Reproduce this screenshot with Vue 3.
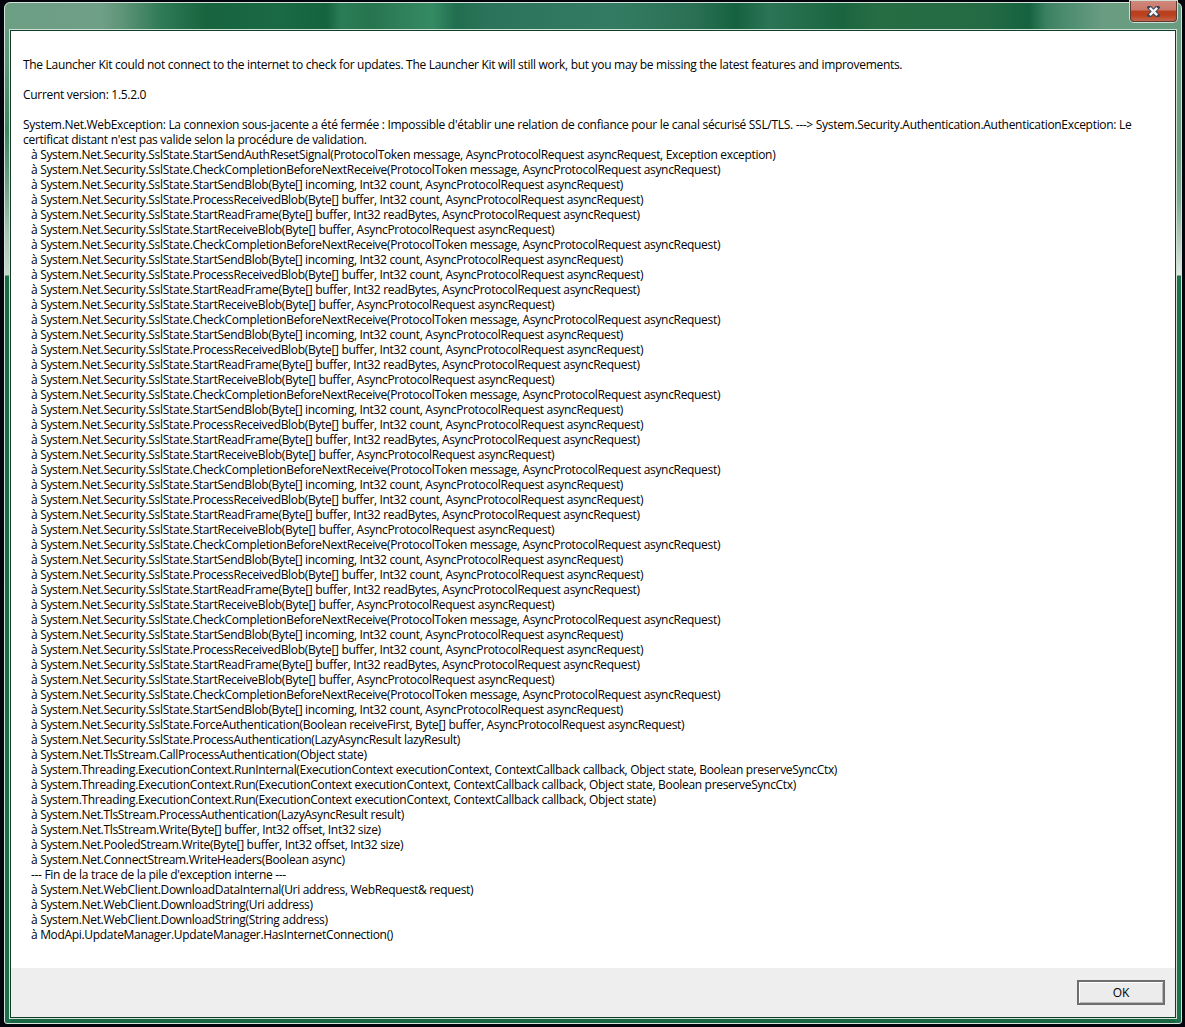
<script setup>
const C = "à System.Net.Security.SslState.CheckCompletionBeforeNextReceive(ProtocolToken message, AsyncProtocolRequest asyncRequest)"
const S = "à System.Net.Security.SslState.StartSendBlob(Byte[] incoming, Int32 count, AsyncProtocolRequest asyncRequest)"
const P = "à System.Net.Security.SslState.ProcessReceivedBlob(Byte[] buffer, Int32 count, AsyncProtocolRequest asyncRequest)"
const R = "à System.Net.Security.SslState.StartReadFrame(Byte[] buffer, Int32 readBytes, AsyncProtocolRequest asyncRequest)"
const B = "à System.Net.Security.SslState.StartReceiveBlob(Byte[] buffer, AsyncProtocolRequest asyncRequest)"
const cycle = [C, S, P, R, B]
const head = [
  "The Launcher Kit could not connect to the internet to check for updates. The Launcher Kit will still work, but you may be missing the latest features and improvements.",
  "\u00a0",
  "Current version: 1.5.2.0",
  "\u00a0",
  "System.Net.WebException: La connexion sous-jacente a été fermée : Impossible d'établir une relation de confiance pour le canal sécurisé SSL/TLS. ---> System.Security.Authentication.AuthenticationException: Le",
  "certificat distant n'est pas valide selon la procédure de validation."
]
const frames = [
  "à System.Net.Security.SslState.StartSendAuthResetSignal(ProtocolToken message, AsyncProtocolRequest asyncRequest, Exception exception)",
  ...Array.from({ length: 7 }).flatMap(() => cycle),
  C,
  S,
  "à System.Net.Security.SslState.ForceAuthentication(Boolean receiveFirst, Byte[] buffer, AsyncProtocolRequest asyncRequest)",
  "à System.Net.Security.SslState.ProcessAuthentication(LazyAsyncResult lazyResult)",
  "à System.Net.TlsStream.CallProcessAuthentication(Object state)",
  "à System.Threading.ExecutionContext.RunInternal(ExecutionContext executionContext, ContextCallback callback, Object state, Boolean preserveSyncCtx)",
  "à System.Threading.ExecutionContext.Run(ExecutionContext executionContext, ContextCallback callback, Object state, Boolean preserveSyncCtx)",
  "à System.Threading.ExecutionContext.Run(ExecutionContext executionContext, ContextCallback callback, Object state)",
  "à System.Net.TlsStream.ProcessAuthentication(LazyAsyncResult result)",
  "à System.Net.TlsStream.Write(Byte[] buffer, Int32 offset, Int32 size)",
  "à System.Net.PooledStream.Write(Byte[] buffer, Int32 offset, Int32 size)",
  "à System.Net.ConnectStream.WriteHeaders(Boolean async)",
  "--- Fin de la trace de la pile d'exception interne ---",
  "à System.Net.WebClient.DownloadDataInternal(Uri address, WebRequest& request)",
  "à System.Net.WebClient.DownloadString(Uri address)",
  "à System.Net.WebClient.DownloadString(String address)",
  "à ModApi.UpdateManager.UpdateManager.HasInternetConnection()"
]
</script>

<template>
  <div class="page">
    <div class="window">
      <button class="close" aria-label="Close">
        <svg width="13" height="11" viewBox="0 0 13 11">
          <path d="M2.5 1.5 L10.5 9.5 M10.5 1.5 L2.5 9.5" stroke="#3c4658" stroke-width="4.4" stroke-linecap="square" fill="none" />
          <path d="M2.8 1.8 L10.2 9.2 M10.2 1.8 L2.8 9.2" stroke="#f4f6f8" stroke-width="2.4" stroke-linecap="butt" fill="none" />
        </svg>
      </button>
      <div class="rim">
        <div class="panel">
          <div class="message">
            <div v-for="(l, i) in head" :key="'h' + i" class="line">{{ l }}</div>
            <div v-for="(l, i) in frames" :key="'f' + i" class="line frame">{{ l }}</div>
          </div>
          <div class="footer">
            <button class="ok">OK</button>
          </div>
        </div>
      </div>
    </div>
  </div>
</template>

<style scoped>
.page {
  width: 1185px;
  height: 1027px;
  box-sizing: border-box;
  padding: 2px 3px 3px 4px;
  background: #04040c;
  overflow: hidden;
}
.window {
  position: relative;
  box-sizing: border-box;
  width: 1178px;
  height: 1022px;
  padding: 26px 4px 4px 4px;
  border: 1px solid #d5e2da;
  border-radius: 6px 6px 3px 3px;
  background:
    linear-gradient(to right,
      #6d9f85 0, #6f9f87 96px, #5f9579 116px, #2f7a57 156px, #17643f 201px, #1a6a45 276px, #15633f 321px, #2a7c57 336px,
      #27754f 366px, #2f7f5b 396px, #348b63 428px, #226e50 451px, #2c735b 486px, #337c63 608px, #2b7055 689px, #15623f 731px,
      #2b7455 764px, #1a6540 838px, #266d44 872px, #246b45 981px, #15623f 1024px, #3a8060 1041px, #4a8b6c 1058px, #6a9c82 1098px, #6a9c82 100%)
      0 0 / 100% 27px no-repeat,
    linear-gradient(to bottom,
      #6d9f85 0, #5f9579 60px, #3f8560 127px, #6f9f87 180px, #a5c2b2 227px, #c5d5cb 272px, #1a6a45 273px, #1f6f4c 100%)
      0 0 / 6px 100% no-repeat,
    linear-gradient(to bottom,
      #6a9c82 0, #6a9c82 150px, #7fab94 197px, #e0e8e3 272px, #1f6f4c 273px, #1f6f4c 100%)
      100% 0 / 6px 100% no-repeat,
    #1a6542;
}
.close {
  position: absolute;
  top: -2px;
  right: 4px;
  width: 47px;
  height: 21px;
  padding: 0;
  display: flex;
  align-items: center;
  justify-content: center;
  border: 1px solid #5c3a33;
  border-top: 0;
  border-radius: 0 0 4px 4px;
  box-shadow: 0 0 0 1px #cfdcd4;
  background: linear-gradient(to bottom, #d0877a 0, #c9776a 45%, #b8401f 50%, #bb3f1d 70%, #c0664c 100%);
}
.rim {
  box-sizing: border-box;
  height: 990px;
  border: 1px solid #cfe0d6;
}
.panel {
  box-sizing: border-box;
  height: 988px;
  border: 1px solid #0f3d28;
  display: flex;
  flex-direction: column;
  background: #fff;
}
.message {
  flex: 1;
  padding: 26px 12px 0;
  font-family: "Open Sans", sans-serif;
  font-size: 12px;
  letter-spacing: -0.3px;
  line-height: 15px;
  color: #000;
}
.line {
  white-space: nowrap;
}
.frame {
  padding-left: 8px;
  letter-spacing: -0.32px;
}
.footer {
  height: 49px;
  box-sizing: border-box;
  padding: 12px 10px 0 0;
  display: flex;
  justify-content: flex-end;
  align-items: flex-start;
  background: #eeeeee;
}
.ok {
  box-sizing: border-box;
  width: 88px;
  height: 25px;
  padding: 0;
  border: 2px solid #6e6e6e;
  background: #ececec;
  box-shadow: inset 1px 1px 0 #fff, inset -1px -1px 0 #b8b8b8;
  font-family: "Open Sans", sans-serif;
  font-size: 12px;
  color: #000;
}
</style>

<style>
html, body {
  margin: 0;
  background: #04040c;
}
</style>
